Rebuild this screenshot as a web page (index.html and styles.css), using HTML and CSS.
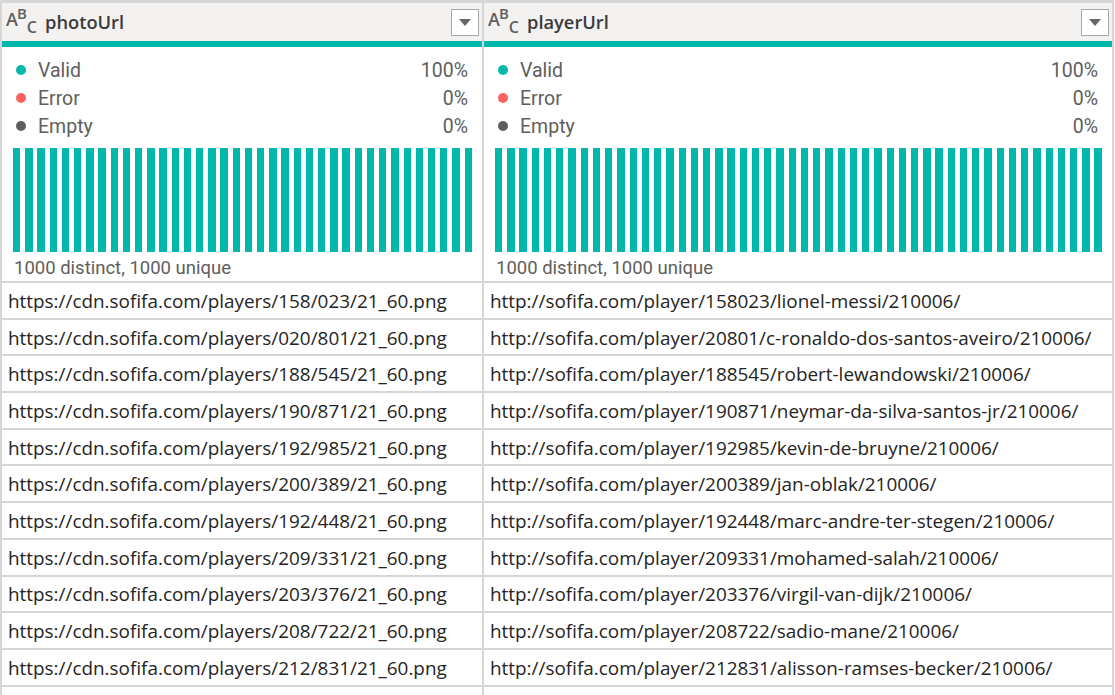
FILE: index.html
```html
<!DOCTYPE html>
<html>
<head>
<meta charset="utf-8">
<link rel="stylesheet" href="styles.css">
</head>
<body>
<div class="grid">
  <div class="col col1">
    <div class="head">
      <span class="abc">A<sup>B</sup><sub>C</sub></span>
      <span class="title">photoUrl</span>
      <span class="dd"><svg width="12" height="7" viewBox="0 0 12 7"><path d="M0 0 H12 L6 7 Z" fill="#666"/></svg></span>
    </div>
    <div class="teal"></div>
    <div class="stats">
      <div class="srow"><span class="dot valid"></span><span class="lbl">Valid</span><span class="pct">100%</span></div>
      <div class="srow"><span class="dot error"></span><span class="lbl">Error</span><span class="pct">0%</span></div>
      <div class="srow"><span class="dot empty"></span><span class="lbl">Empty</span><span class="pct">0%</span></div>
      <div class="bars">
        <i></i><i></i><i></i><i></i><i></i><i></i><i></i><i></i><i></i><i></i>
        <i></i><i></i><i></i><i></i><i></i><i></i><i></i><i></i><i></i><i></i>
        <i></i><i></i><i></i><i></i><i></i><i></i><i></i><i></i><i></i><i></i>
        <i></i><i></i><i></i><i></i><i></i><i></i><i></i><i></i>
      </div>
      <div class="dist">1000 distinct, 1000 unique</div>
    </div>
    <div class="cell">https://cdn.sofifa.com/players/158/023/21_60.png</div>
    <div class="cell">https://cdn.sofifa.com/players/020/801/21_60.png</div>
    <div class="cell">https://cdn.sofifa.com/players/188/545/21_60.png</div>
    <div class="cell">https://cdn.sofifa.com/players/190/871/21_60.png</div>
    <div class="cell">https://cdn.sofifa.com/players/192/985/21_60.png</div>
    <div class="cell">https://cdn.sofifa.com/players/200/389/21_60.png</div>
    <div class="cell">https://cdn.sofifa.com/players/192/448/21_60.png</div>
    <div class="cell">https://cdn.sofifa.com/players/209/331/21_60.png</div>
    <div class="cell">https://cdn.sofifa.com/players/203/376/21_60.png</div>
    <div class="cell">https://cdn.sofifa.com/players/208/722/21_60.png</div>
    <div class="cell">https://cdn.sofifa.com/players/212/831/21_60.png</div>
    <div class="cell"></div>
  </div>
  <div class="col col2">
    <div class="head">
      <span class="abc">A<sup>B</sup><sub>C</sub></span>
      <span class="title">playerUrl</span>
      <span class="dd"><svg width="12" height="7" viewBox="0 0 12 7"><path d="M0 0 H12 L6 7 Z" fill="#666"/></svg></span>
    </div>
    <div class="teal"></div>
    <div class="stats">
      <div class="srow"><span class="dot valid"></span><span class="lbl">Valid</span><span class="pct">100%</span></div>
      <div class="srow"><span class="dot error"></span><span class="lbl">Error</span><span class="pct">0%</span></div>
      <div class="srow"><span class="dot empty"></span><span class="lbl">Empty</span><span class="pct">0%</span></div>
      <div class="bars">
        <i></i><i></i><i></i><i></i><i></i><i></i><i></i><i></i><i></i><i></i>
        <i></i><i></i><i></i><i></i><i></i><i></i><i></i><i></i><i></i><i></i>
        <i></i><i></i><i></i><i></i><i></i><i></i><i></i><i></i><i></i><i></i>
        <i></i><i></i><i></i><i></i><i></i><i></i><i></i><i></i><i></i><i></i>
        <i></i><i></i><i></i><i></i><i></i><i></i><i></i><i></i><i></i><i></i>
      </div>
      <div class="dist">1000 distinct, 1000 unique</div>
    </div>
    <div class="cell">http://sofifa.com/player/158023/lionel-messi/210006/</div>
    <div class="cell">http://sofifa.com/player/20801/c-ronaldo-dos-santos-aveiro/210006/</div>
    <div class="cell">http://sofifa.com/player/188545/robert-lewandowski/210006/</div>
    <div class="cell">http://sofifa.com/player/190871/neymar-da-silva-santos-jr/210006/</div>
    <div class="cell">http://sofifa.com/player/192985/kevin-de-bruyne/210006/</div>
    <div class="cell">http://sofifa.com/player/200389/jan-oblak/210006/</div>
    <div class="cell">http://sofifa.com/player/192448/marc-andre-ter-stegen/210006/</div>
    <div class="cell">http://sofifa.com/player/209331/mohamed-salah/210006/</div>
    <div class="cell">http://sofifa.com/player/203376/virgil-van-dijk/210006/</div>
    <div class="cell">http://sofifa.com/player/208722/sadio-mane/210006/</div>
    <div class="cell">http://sofifa.com/player/212831/alisson-ramses-becker/210006/</div>
    <div class="cell"></div>
  </div>
</div>
</body>
</html>
```
FILE: styles.css
```css
html, body {
  margin: 0;
  padding: 0;
  background: #ffffff;
  overflow: hidden;
}
.grid {
  display: flex;
  height: 695px;
  overflow: hidden;
}
.col {
  display: flex;
  flex-direction: column;
  border-left: 2px solid #d6d6d6;
  flex: none;
}
.col > * { flex: none; }
.col1 { width: 480px; }
.col2 { width: 628px; border-right: 2px solid #d6d6d6; }
.head {
  height: 38px;
  border-top: 3px solid #d6d6d6;
  background: #f3f2f1;
  display: flex;
  align-items: center;
  padding: 0 3px 0 4px;
  font-family: "Open Sans", sans-serif;
}
.abc {
  font-family: "Open Sans", sans-serif;
  font-size: 18px;
  font-weight: 600;
  color: #5f5f5f;
  width: 39px;
  line-height: 1;
  position: relative;
  top: -2px;
}
.abc sup { font-size: 15px; vertical-align: 7px; margin-left: -1px; }
.abc sub { font-size: 16px; vertical-align: -7px; }
.title {
  flex: 1;
  font-size: 18.3px;
  font-weight: 600;
  color: #3b3a39;
  position: relative;
  top: -1px;
}
.dd {
  width: 26px;
  height: 25px;
  border: 1px solid #a8a8a8;
  background: #fff;
  display: flex;
  align-items: center;
  justify-content: center;
}
.teal {
  height: 6px;
  background: #01b8aa;
}
.stats {
  height: 234px;
  padding: 9px 14px 0 14px;
  box-sizing: border-box;
  font-family: "Roboto", sans-serif;
  color: #605e5c;
  display: flex;
  flex-direction: column;
}
.srow {
  height: 28px;
  display: flex;
  align-items: center;
  font-size: 19.5px;
  flex: none;
}
.dot {
  width: 10px;
  height: 10px;
  border-radius: 50%;
  margin-right: 12px;
}
.dot.valid { background: #01b8aa; }
.dot.error { background: #fd625e; }
.dot.empty { background: #605e5c; }
.lbl { flex: 1; }
.bars {
  display: flex;
  justify-content: space-between;
  height: 104px;
  margin: 8px -4px 0 -3px;
  flex: none;
}
.bars i {
  display: block;
  width: 7.3px;
  background: #01b8aa;
}
.dist {
  font-size: 18.5px;
  margin-top: 5px;
  margin-left: -2px;
  line-height: 22px;
}
.cell {
  height: 36.7px;
  box-sizing: border-box;
  border-top: 2px solid #d6d6d6;
  display: flex;
  align-items: center;
  padding: 1px 0 0 6px;
  font-family: "Open Sans", sans-serif;
  font-size: 18.9px;
  color: #252423;
  white-space: nowrap;
}
```
